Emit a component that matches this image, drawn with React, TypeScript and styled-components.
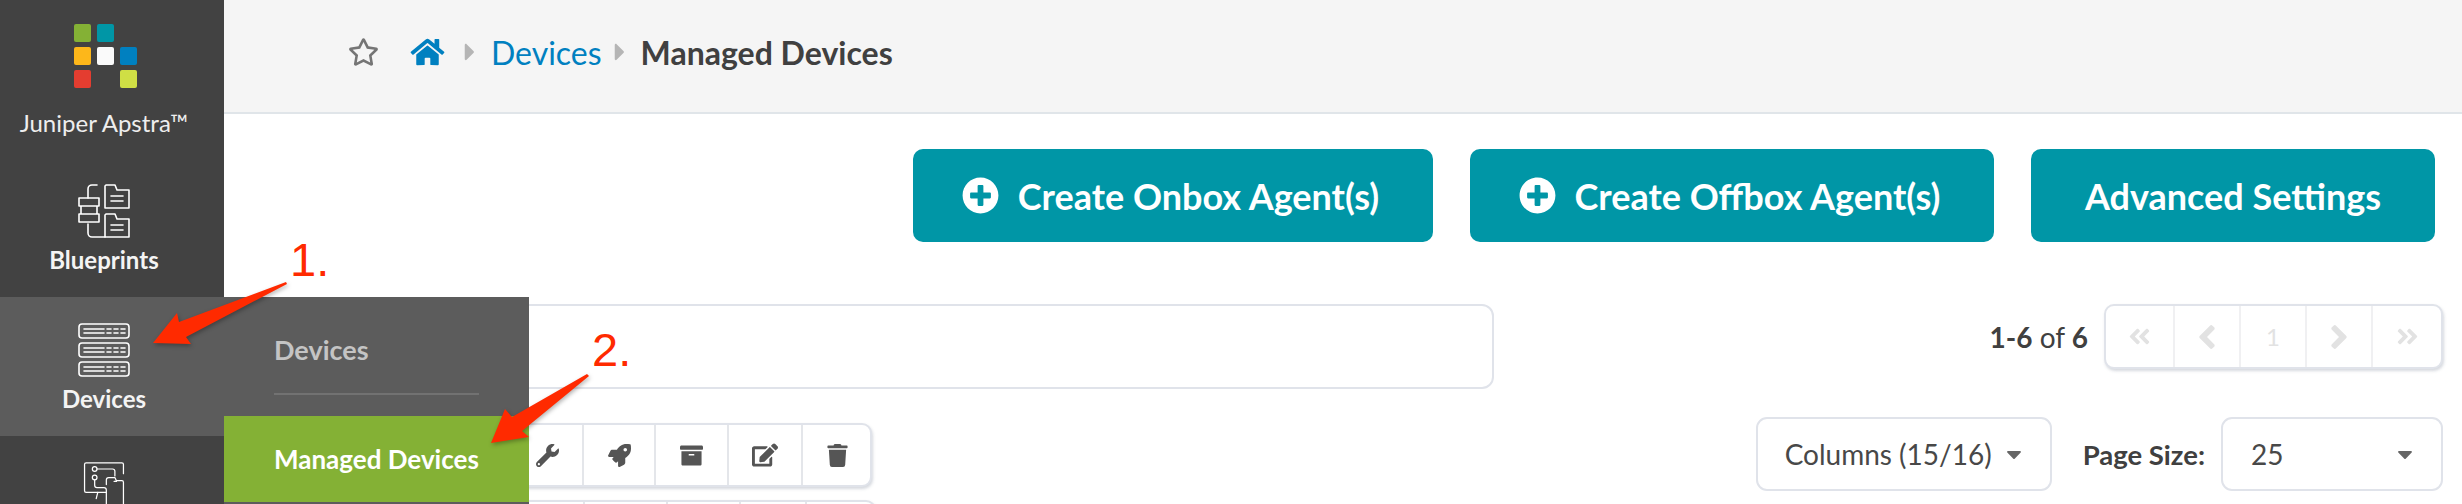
import styled, { createGlobalStyle } from 'styled-components';
import {
  FaAngleDoubleLeft,
  FaAngleDoubleRight,
  FaAngleLeft,
  FaAngleRight,
  FaArchive,
  FaCaretDown,
  FaCaretRight,
  FaEdit,
  FaHome,
  FaPlusCircle,
  FaRegStar,
  FaRocket,
  FaTrash,
  FaWrench,
} from 'react-icons/fa';

const GlobalStyle = createGlobalStyle`
  html, body {
    margin: 0;
    padding: 0;
    background: #fff;
  }
  * {
    box-sizing: border-box;
  }
`;

const Page = styled.div`
  position: relative;
  display: flex;
  width: 2462px;
  height: 504px;
  overflow: hidden;
  font-family: Lato, 'Liberation Sans', sans-serif;
  color: #404040;
`;

const Sidebar = styled.aside`
  flex: 0 0 224px;
  background: #424242;
  color: #fff;
  z-index: 2;
`;

const Brand = styled.div`
  height: 162px;
  padding-top: 24px;
  display: flex;
  flex-direction: column;
  align-items: center;
`;

const LogoGrid = styled.div`
  display: grid;
  grid-template-columns: repeat(3, 17px);
  grid-auto-rows: 18px;
  gap: 5px 6px;
  margin-right: 14px;
`;

const LogoSquare = styled.span<{ $color: string }>`
  border-radius: 2px;
  background: ${props => props.$color};
`;

const BrandName = styled.div`
  margin-top: 21px;
  margin-right: 16px;
  font-size: 24px;
  line-height: 28px;
  color: #eee;
  white-space: nowrap;
`;

const NavItem = styled.div<{ $active?: boolean; $height: number }>`
  position: relative;
  height: ${props => props.$height}px;
  display: flex;
  flex-direction: column;
  align-items: center;
  background: ${props => (props.$active ? '#5c5c5c' : 'transparent')};
`;

const NavIcon = styled.svg<{ $top: number }>`
  display: block;
  margin-top: ${props => props.$top}px;
  margin-right: 16px;
  width: 52px;
  height: 54px;
  fill: none;
  stroke: #fff;
  stroke-width: 1.6;
  stroke-linecap: round;
  stroke-linejoin: round;
`;

const NavLabel = styled.div`
  margin-top: 7px;
  margin-right: 16px;
  font-size: 24px;
  line-height: 30px;
  font-weight: 700;
  color: #f4f4f4;
`;

const Flyout = styled.div`
  position: absolute;
  left: 100%;
  top: 0;
  width: 305px;
  height: 207px;
  background: #5c5c5c;
`;

const FlyoutTitle = styled.div`
  margin: 0 50px;
  height: 98px;
  padding-top: 36px;
  font-size: 27px;
  line-height: 34px;
  font-weight: 700;
  color: #c4c4c4;
  border-bottom: 2px solid #727272;
`;

const FlyoutLink = styled.div`
  margin-top: 21px;
  height: 86px;
  padding-left: 50px;
  display: flex;
  align-items: center;
  background: #84b135;
  font-size: 26px;
  font-weight: 700;
  color: #fff;
  white-space: nowrap;
`;

const Main = styled.main`
  flex: 1;
  min-width: 0;
`;

const Crumbs = styled.header`
  height: 114px;
  padding: 0 0 8px 124px;
  display: flex;
  align-items: center;
  background: #f5f5f5;
  border-bottom: 2px solid #e0e5e9;
  white-space: nowrap;
`;

const StarIcon = styled(FaRegStar)`
  width: 31px;
  height: 28px;
  color: #757575;
`;

const HomeIcon = styled(FaHome)`
  margin-left: 30px;
  width: 37px;
  height: 30px;
  color: #0080c0;
`;

const CrumbArrow = styled(FaCaretRight)<{ $left: number }>`
  margin: 0 15px 0 ${props => props.$left}px;
  width: 12px;
  height: 28px;
  color: #b5b5b5;
`;

const CrumbLink = styled.span`
  font-size: 32px;
  color: #0080c0;
`;

const CrumbCurrent = styled.span`
  font-size: 32px;
  font-weight: 700;
  color: #404040;
`;

const Content = styled.div`
  padding: 35px 19px 0 24px;
`;

const Actions = styled.div`
  display: flex;
  justify-content: flex-end;
  gap: 37px;
  padding-right: 8px;
`;

const ActionButton = styled.button<{ $width: number; $shift?: number }>`
  width: ${props => props.$width}px;
  height: 93px;
  padding: 0 ${props => props.$shift ?? 0}px 0 0;
  display: flex;
  align-items: center;
  justify-content: center;
  gap: 19px;
  border: 0;
  border-radius: 10px;
  background: #0096a6;
  color: #fff;
  font-family: inherit;
  font-size: 36px;
  font-weight: 700;
  white-space: nowrap;
`;

const PlusIcon = styled(FaPlusCircle)`
  width: 37px;
  height: 37px;
`;

const SearchRow = styled.div`
  margin-top: 62px;
  display: flex;
  align-items: flex-start;
  justify-content: space-between;
`;

const SearchBox = styled.div`
  width: 1246px;
  height: 85px;
  border: 2px solid #e0e3ea;
  border-radius: 12px;
  background: #fff;
`;

const PagerWrap = styled.div`
  display: flex;
  align-items: center;
  gap: 16px;
  height: 65px;
  white-space: nowrap;
`;

const PagerInfo = styled.div`
  font-size: 28px;
  color: #404040;

  b {
    font-weight: 700;
  }
`;

const ButtonGroup = styled.div`
  display: flex;
  height: 65px;
  background: #fff;
  border: 2px solid #e0e3ea;
  border-radius: 10px;
  box-shadow: 1px 2px 3px rgba(120, 130, 150, 0.3);
  overflow: hidden;
`;

const GroupCell = styled.div<{ $width: number; $muted?: boolean; $icon?: number }>`
  flex: 0 0 ${props => props.$width}px;
  display: flex;
  align-items: center;
  justify-content: center;
  border-left: 2px solid ${props => (props.$muted ? '#f0f0f2' : '#e4e6ea')};
  color: ${props => (props.$muted ? '#e2e2e2' : '#555')};
  font-size: 24px;

  &:first-child {
    border-left: 0;
  }

  svg {
    width: ${props => props.$icon ?? 23}px;
    height: ${props => props.$icon ?? 23}px;
  }
`;

const ToolsRow = styled.div`
  margin-top: 28px;
  display: flex;
  align-items: flex-start;
  justify-content: space-between;
`;

const Toolbar = styled(ButtonGroup)`
  width: 624px;
  height: 64px;
  margin-top: 6px;
`;

const TableControls = styled.div`
  display: flex;
  align-items: center;
`;

const Dropdown = styled.div<{ $width: number; $pad: number }>`
  width: ${props => props.$width}px;
  height: 74px;
  padding: 0 28px 0 ${props => props.$pad}px;
  display: flex;
  align-items: center;
  justify-content: space-between;
  border: 2px solid #e0e3ea;
  border-radius: 11px;
  font-size: 28px;
  color: #484848;
  white-space: nowrap;
`;

const CaretIcon = styled(FaCaretDown)`
  width: 16px;
  height: 24px;
  color: #666;
`;

const SizeLabel = styled.span`
  margin: 0 16px 0 31px;
  font-size: 27.5px;
  font-weight: 700;
  white-space: nowrap;
`;

const NextToolbar = styled(ButtonGroup)`
  width: 628px;
  margin-top: 9px;
`;

const Annotations = styled.svg`
  position: absolute;
  left: 0;
  top: 0;
  z-index: 3;
  width: 2462px;
  height: 504px;
  pointer-events: none;
  filter: drop-shadow(1px 2px 2px rgba(0, 0, 0, 0.3));
`;

const StepNumber = styled.div<{ $x: number; $y: number }>`
  position: absolute;
  z-index: 3;
  left: ${props => props.$x}px;
  top: ${props => props.$y}px;
  font-family: 'Liberation Sans', sans-serif;
  font-size: 47px;
  line-height: 54px;
  color: #ff2a00;
`;

const logoColors = ['#84b135', '#0096a6', null, '#fdb71a', '#fafafa', '#0080c0', '#e43d30', null, '#cfdf45'];

const App = () => {
  return (
    <Page>
      <GlobalStyle />
      <Sidebar>
        <Brand>
          <LogoGrid>
            {logoColors.map((color, i) =>
              color ? <LogoSquare key={i} $color={color} /> : <span key={i} />
            )}
          </LogoGrid>
          <BrandName>Juniper Apstra™</BrandName>
        </Brand>
        <NavItem $height={135}>
          <NavIcon $top={22} viewBox="0 0 52 54">
            <path d="M10 14V5a4 4 0 0 1 4-4h5M10 40v9a4 4 0 0 0 4 4h13" />
            <path d="M1 14h20v8H1zM3 22h16v8H3zM1 30h20v8H1z" />
            <path d="M28 1h9l2 5h12v18H27V2zM33 12h12M33 17h12" />
            <path d="M28 30h9l2 5h12v18H27V31zM33 41h12M33 46h12" />
          </NavIcon>
          <NavLabel>Blueprints</NavLabel>
        </NavItem>
        <NavItem $height={139} $active>
          <NavIcon $top={26} viewBox="0 0 52 54">
            <rect x="1" y="1" width="50" height="14" rx="3" />
            <rect x="1" y="20" width="50" height="14" rx="3" />
            <rect x="1" y="39" width="50" height="14" rx="3" />
            <path d="M6 6h20M6 10h20M29 6h4M29 10h4M36 6h4M36 10h4M43 6h4M43 10h4" />
            <path d="M6 25h20M6 29h20M29 25h4M29 29h4M36 25h4M36 29h4M43 25h4M43 29h4" />
            <path d="M6 44h20M6 48h20M29 44h4M29 48h4M36 44h4M36 48h4M43 44h4M43 48h4" />
          </NavIcon>
          <NavLabel>Devices</NavLabel>
          <Flyout>
            <FlyoutTitle>Devices</FlyoutTitle>
            <FlyoutLink>Managed Devices</FlyoutLink>
          </Flyout>
        </NavItem>
        <NavItem $height={68}>
          <NavIcon $top={26} viewBox="0 0 52 54">
            <path d="M51 15V3a2 2 0 0 0-2-2H3a2 2 0 0 0-2 2v34a2 2 0 0 0 2 2h26" />
            <circle cx="14" cy="9" r="3" />
            <circle cx="14" cy="20" r="3" />
            <path d="M17 9h20a3 3 0 0 1 3 3v6M14 23v7a3 3 0 0 0 3 3h9a3 3 0 0 1 3 3v18" />
            <path d="M32 20a3 3 0 0 0-3 3v6M32 20h8l2 4h7a2 2 0 0 1 2 2v28M39 25h3M18 39l-2 8" />
          </NavIcon>
        </NavItem>
      </Sidebar>
      <Main>
        <Crumbs>
          <StarIcon />
          <HomeIcon />
          <CrumbArrow $left={18} />
          <CrumbLink>Devices</CrumbLink>
          <CrumbArrow $left={12} />
          <CrumbCurrent>Managed Devices</CrumbCurrent>
        </Crumbs>
        <Content>
          <Actions>
            <ActionButton $width={520} $shift={5}>
              <PlusIcon />
              Create Onbox Agent(s)
            </ActionButton>
            <ActionButton $width={524} $shift={5}>
              <PlusIcon />
              Create Offbox Agent(s)
            </ActionButton>
            <ActionButton $width={404}>Advanced Settings</ActionButton>
          </Actions>
          <SearchRow>
            <SearchBox />
            <PagerWrap>
              <PagerInfo>
                <b>1-6</b> of <b>6</b>
              </PagerInfo>
              <ButtonGroup>
                <GroupCell $width={67} $muted $icon={25}>
                  <FaAngleDoubleLeft />
                </GroupCell>
                <GroupCell $width={66} $muted $icon={38}>
                  <FaAngleLeft />
                </GroupCell>
                <GroupCell $width={66} $muted>
                  1
                </GroupCell>
                <GroupCell $width={66} $muted $icon={38}>
                  <FaAngleRight />
                </GroupCell>
                <GroupCell $width={70} $muted $icon={25}>
                  <FaAngleDoubleRight />
                </GroupCell>
              </ButtonGroup>
            </PagerWrap>
          </SearchRow>
          <ToolsRow>
            <Toolbar>
              <GroupCell $width={260} />
              <GroupCell $width={72}>
                <FaWrench />
              </GroupCell>
              <GroupCell $width={72}>
                <FaRocket />
              </GroupCell>
              <GroupCell $width={73}>
                <FaArchive />
              </GroupCell>
              <GroupCell $width={74} $icon={26}>
                <FaEdit />
              </GroupCell>
              <GroupCell $width={70}>
                <FaTrash />
              </GroupCell>
            </Toolbar>
            <TableControls>
              <Dropdown $width={296} $pad={27}>
                Columns (15/16)
                <CaretIcon />
              </Dropdown>
              <SizeLabel>Page Size:</SizeLabel>
              <Dropdown $width={222} $pad={28}>
                25
                <CaretIcon />
              </Dropdown>
            </TableControls>
          </ToolsRow>
          <NextToolbar>
            <GroupCell $width={333} />
            <GroupCell $width={83} />
            <GroupCell $width={73} />
            <GroupCell $width={66} />
            <GroupCell $width={69} />
          </NextToolbar>
        </Content>
      </Main>
      <Annotations viewBox="0 0 2462 504">
        <polygon fill="#ff2a00" points="286,282 179,322 177,313 153,343 191,344 186,337 287,284" />
        <polygon fill="#ff2a00" points="587,374 512,417 505,409 491,443 529,437 522,431 589,376" />
      </Annotations>
      <StepNumber $x={290} $y={233}>1.</StepNumber>
      <StepNumber $x={592} $y={323}>2.</StepNumber>
    </Page>
  );
};

export default App;
